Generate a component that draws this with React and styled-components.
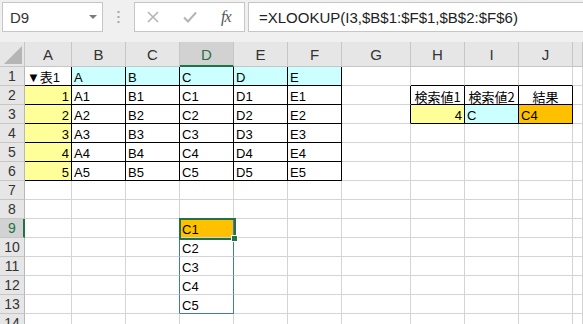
import React from "react";
import styled, { createGlobalStyle } from "styled-components";

const Global = createGlobalStyle`
  html, body { margin: 0; padding: 0; background: #ffffff; overflow: hidden; }
  body { width: 583px; height: 324px; font-family: "Liberation Sans", "Noto Sans CJK JP", sans-serif; }
`;

const Bar = styled.div`
  display: flex;
  align-items: flex-start;
  height: 42px;
  box-sizing: border-box;
  padding: 2px 0 0 2px;
  background: #f0f0f0;
  overflow: hidden;
`;

const NameBox = styled.div`
  width: 101px;
  height: 30px;
  box-sizing: border-box;
  background: #fff;
  border: 1px solid #c6c6c6;
  display: flex;
  align-items: center;
  justify-content: space-between;
  padding: 0 5px 0 7px;
  font-size: 15px;
  color: #333;
`;

const Grip = styled.div`
  width: 31px;
  height: 30px;
  display: flex;
  align-items: center;
  justify-content: center;
`;

const FxBox = styled.div`
  width: 111px;
  height: 30px;
  box-sizing: border-box;
  background: #fff;
  border: 1px solid #c6c6c6;
  display: flex;
  align-items: center;
  padding-left: 12px;
  gap: 24px;
`;

const FxText = styled.span`
  font-family: "Liberation Serif", serif;
  font-style: italic;
  font-size: 16px;
  color: #555;
  letter-spacing: -1px;
`;

const Formula = styled.div`
  flex: 1;
  margin-left: 3px;
  height: 30px;
  box-sizing: border-box;
  background: #fff;
  border: 1px solid #c6c6c6;
  border-right: none;
  display: flex;
  align-items: center;
  padding-left: 10px;
  font-size: 15px;
  color: #222;
  white-space: nowrap;
  overflow: hidden;
`;

const Sheet = styled.div`
  display: grid;
  width: 583px;
  grid-template-columns: 25px 47px repeat(5, 54px) 69px repeat(3, 54px) 1fr;
  grid-auto-rows: 19px;
  grid-template-rows: 25px;
  overflow: hidden;
`;

const Corner = styled.div`
  background: #e6e6e6;
  border-right: 1px solid #c6c6c6;
  border-bottom: 1px solid #c6c6c6;
  box-sizing: border-box;
  display: flex;
  align-items: flex-end;
  justify-content: flex-end;
  padding: 0 2px 2px 0;
`;

const ColHead = styled.div`
  box-sizing: border-box;
  background: ${(p) => (p.$sel ? "#d2d2d2" : "#e6e6e6")};
  border-right: 1px solid #c6c6c6;
  border-bottom: ${(p) => (p.$sel ? "2px solid #217346" : "1px solid #c6c6c6")};
  color: ${(p) => (p.$sel ? "#217346" : "#333")};
  display: flex;
  align-items: center;
  justify-content: center;
  font-size: 15px;
  padding-top: ${(p) => (p.$sel ? "1px" : "0")};
`;

const RowHead = styled.div`
  box-sizing: border-box;
  background: ${(p) => (p.$sel ? "#d2d2d2" : "#e6e6e6")};
  border-right: ${(p) => (p.$sel ? "2px solid #217346" : "1px solid #b8b8b8")};
  border-bottom: 1px solid #c6c6c6;
  color: ${(p) => (p.$sel ? "#217346" : "#333")};
  text-align: center;
  font-size: 14px;
  line-height: 18px;
  padding-left: ${(p) => (p.$sel ? "1px" : "0")};
`;

const Cell = styled.div`
  position: relative;
  box-sizing: border-box;
  background: ${(p) => p.$bg || "#fff"};
  border-right: 1px solid ${(p) => p.$br || "#d4d4d4"};
  border-bottom: 1px solid ${(p) => p.$bb || "#d4d4d4"};
  font-size: 13px;
  line-height: 16px;
  padding: 3px 2px 0 2px;
  text-align: ${(p) => p.$align || "left"};
  color: #000;
  white-space: nowrap;
`;

const Jp = styled.span`
  font-size: 13px;
  font-family: "Noto Sans CJK JP", sans-serif;
  line-height: 16px;
`;

const Selection = styled.div`
  position: absolute;
  left: -1px;
  top: -1px;
  right: -3px;
  bottom: -3px;
  border: 2px solid #217346;
  z-index: 2;
  pointer-events: none;
`;

const Handle = styled.div`
  position: absolute;
  right: -5px;
  bottom: -5px;
  width: 7px;
  height: 7px;
  box-sizing: border-box;
  background: #217346;
  border: 1px solid #fff;
  z-index: 3;
`;

const COLS = ["A", "B", "C", "D", "E", "F", "G", "H", "I", "J", "K"];
const BLACK = "#000";
const BLUE = "#3f76d1";
const CYAN = "#ccffff";
const YELLOW = "#ffff99";
const ORANGE = "#ffc000";

function cellInfo(r, c) {
  const ci = COLS.indexOf(c);
  const info = { text: "", align: "left" };
  if (r >= 1 && r <= 6 && ci <= 5) {
    info.br = BLACK;
    info.bb = BLACK;
    if (r === 1) {
      if (c === "A") info.text = "▼表1";
      else {
        info.text = ["A", "B", "C", "D", "E"][ci - 1];
        info.bg = CYAN;
      }
    } else {
      const n = r - 1;
      if (c === "A") {
        info.text = String(n);
        info.align = "right";
        info.bg = YELLOW;
      } else {
        info.text = ["A", "B", "C", "D", "E"][ci - 1] + n;
      }
    }
  }
  if ((r === 2 || r === 3) && c === "G") info.br = BLACK;
  if (r === 1 && (c === "H" || c === "I" || c === "J")) info.bb = BLACK;
  if ((r === 2 || r === 3) && (c === "H" || c === "I" || c === "J")) {
    info.br = BLACK;
    info.bb = BLACK;
    if (r === 2) {
      info.jp = true;
      info.align = "center";
      info.text = { H: "検索値1", I: "検索値2", J: "結果" }[c];
    } else if (c === "H") {
      info.text = "4";
      info.align = "right";
      info.bg = YELLOW;
    } else if (c === "I") {
      info.text = "C";
      info.bg = CYAN;
    } else {
      info.text = "C4";
      info.bg = ORANGE;
    }
  }
  if (r >= 9 && r <= 13) {
    if (c === "C") info.br = BLUE;
    if (c === "D") {
      info.br = BLUE;
      info.text = "C" + (r - 8);
      if (r === 13) info.bb = BLUE;
      if (r === 9) {
        info.bg = ORANGE;
        info.sel = true;
      }
    }
  }
  return info;
}

const XIcon = () => (
  <svg width="12" height="12" viewBox="0 0 12 12">
    <path d="M1 1 L11 11 M11 1 L1 11" stroke="#b4b4b4" strokeWidth="1.6" fill="none" />
  </svg>
);

const CheckIcon = () => (
  <svg width="14" height="12" viewBox="0 0 14 12">
    <path d="M1 6.5 L5 10.5 L13 1.5" stroke="#b4b4b4" strokeWidth="2" fill="none" />
  </svg>
);

const Caret = () => (
  <svg width="8" height="4" viewBox="0 0 8 4">
    <path d="M0 0 L8 0 L4 4 Z" fill="#7a7a7a" />
  </svg>
);

const Dots = () => (
  <svg width="3" height="12" viewBox="0 0 3 12">
    <rect x="0.5" y="0" width="2" height="2" fill="#a6a6a6" />
    <rect x="0.5" y="5" width="2" height="2" fill="#a6a6a6" />
    <rect x="0.5" y="10" width="2" height="2" fill="#a6a6a6" />
  </svg>
);

const CornerTri = () => (
  <svg width="18" height="18" viewBox="0 0 18 18">
    <path d="M18 0 L18 18 L0 18 Z" fill="#b5b5b5" />
  </svg>
);

export default function App() {
  const rows = [];
  for (let r = 1; r <= 14; r++) {
    rows.push(
      <RowHead key={"rh" + r} $sel={r === 9}>
        {r}
      </RowHead>
    );
    COLS.forEach((c) => {
      const info = cellInfo(r, c);
      rows.push(
        <Cell key={c + r} $bg={info.bg} $br={info.br} $bb={info.bb} $align={info.align}>
          {info.jp ? <Jp>{info.text}</Jp> : info.text}
          {info.sel && <Selection />}
          {info.sel && <Handle />}
        </Cell>
      );
    });
  }
  return (
    <>
      <Global />
      <Bar>
        <NameBox>
          <span>D9</span>
          <Caret />
        </NameBox>
        <Grip>
          <Dots />
        </Grip>
        <FxBox>
          <XIcon />
          <CheckIcon />
          <FxText>fx</FxText>
        </FxBox>
        <Formula>=XLOOKUP(I3,$B$1:$F$1,$B$2:$F$6)</Formula>
      </Bar>
      <Sheet>
        <Corner>
          <CornerTri />
        </Corner>
        {COLS.map((c) => (
          <ColHead key={"h" + c} $sel={c === "D"}>
            {c === "K" ? "" : c}
          </ColHead>
        ))}
        {rows}
      </Sheet>
    </>
  );
}
